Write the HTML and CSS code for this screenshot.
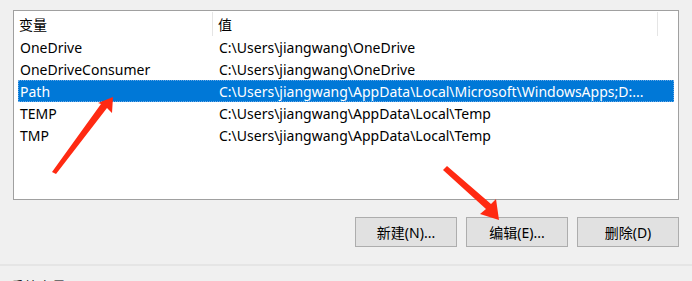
FILE: index.html
```html
<!DOCTYPE html>
<html lang="zh-CN">
<head>
    <meta charset="UTF-8"/>
    <title>环境变量</title>
    <link rel="stylesheet" href="styles.css">
</head>
<body>

<div class="dialog">
    <div class="list-box">
        <div class="list-head">
            <div class="cell name">变量</div>
            <div class="cell value">值</div>
        </div>
        <div class="row">
            <div class="cell name">OneDrive</div>
            <div class="cell value">C:\Users\jiangwang\OneDrive</div>
        </div>
        <div class="row">
            <div class="cell name">OneDriveConsumer</div>
            <div class="cell value">C:\Users\jiangwang\OneDrive</div>
        </div>
        <div class="row selected">
            <div class="cell name">Path</div>
            <div class="cell value">C:\Users\jiangwang\AppData\Local\Microsoft\WindowsApps;D:...</div>
        </div>
        <div class="row">
            <div class="cell name">TEMP</div>
            <div class="cell value">C:\Users\jiangwang\AppData\Local\Temp</div>
        </div>
        <div class="row">
            <div class="cell name">TMP</div>
            <div class="cell value">C:\Users\jiangwang\AppData\Local\Temp</div>
        </div>
    </div>

    <div class="buttons">
        <button class="btn">新建(N)...</button>
        <button class="btn">编辑(E)...</button>
        <button class="btn">删除(D)</button>
    </div>
</div>

<div class="section">
    <div class="section-title">系统变量(S)</div>
</div>

<!-- red annotation arrows drawn over the dialog -->
<svg class="arrows" width="692" height="281" viewBox="0 0 692 281">
    <polygon fill="#ff2a12" points="113,97 112,113 107,108 56,174 52,172 101,104 98,103"/>
    <polygon fill="#ff2a12" points="499,220 480,214 486,209 443,170 447,166 491,204 496,199"/>
</svg>

</body>
</html>
```

FILE: styles.css
```css
* {
    box-sizing: border-box;
}

body {
    margin: 0;
    width: 692px;
    height: 281px;
    overflow: hidden;
    background: #f0f0f0;
    font-family: "Noto Sans", "Noto Sans CJK SC", sans-serif;
    font-size: 14px;
    color: #000;
    position: relative;
}

.dialog {
    padding: 10px 13px 0 13px;
}

.list-box {
    width: 666px;
    height: 190px;
    background: #fff;
    border: 1px solid #a0a0a0;
    padding: 0 4px;
}

.list-head,
.row {
    display: grid;
    grid-template-columns: 195px 445px;
}

.list-head {
    height: 25px;
    align-items: center;
}

.list-head .cell {
    height: 24px;
    line-height: 26px;
    border-right: 1px solid #e5e5e5;
}

.row {
    height: 22px;
    line-height: 21px;
    border: 1px solid transparent;
}

.cell {
    white-space: nowrap;
    overflow: hidden;
}

.cell.name {
    padding-left: 1px;
}

.cell.value {
    padding-left: 5px;
}

.row.selected {
    background: #0078d7;
    color: #fff;
    border: 1px dotted #6aa9e6;
}

.buttons {
    display: flex;
    justify-content: flex-end;
    gap: 9px;
    margin-top: 17px;
}

.btn {
    width: 102px;
    height: 30px;
    background: #e1e1e1;
    border: 1px solid #adadad;
    font-family: "Noto Sans", "Noto Sans CJK SC", sans-serif;
    font-size: 14px;
    color: #000;
    padding: 0;
}

.section {
    margin-top: 17px;
    border-top: 2px solid #e5e5e5;
    padding: 11px 10px 0;
}

.section-title {
    line-height: 20px;
}

.arrows {
    position: absolute;
    top: 0;
    left: 0;
}
```
